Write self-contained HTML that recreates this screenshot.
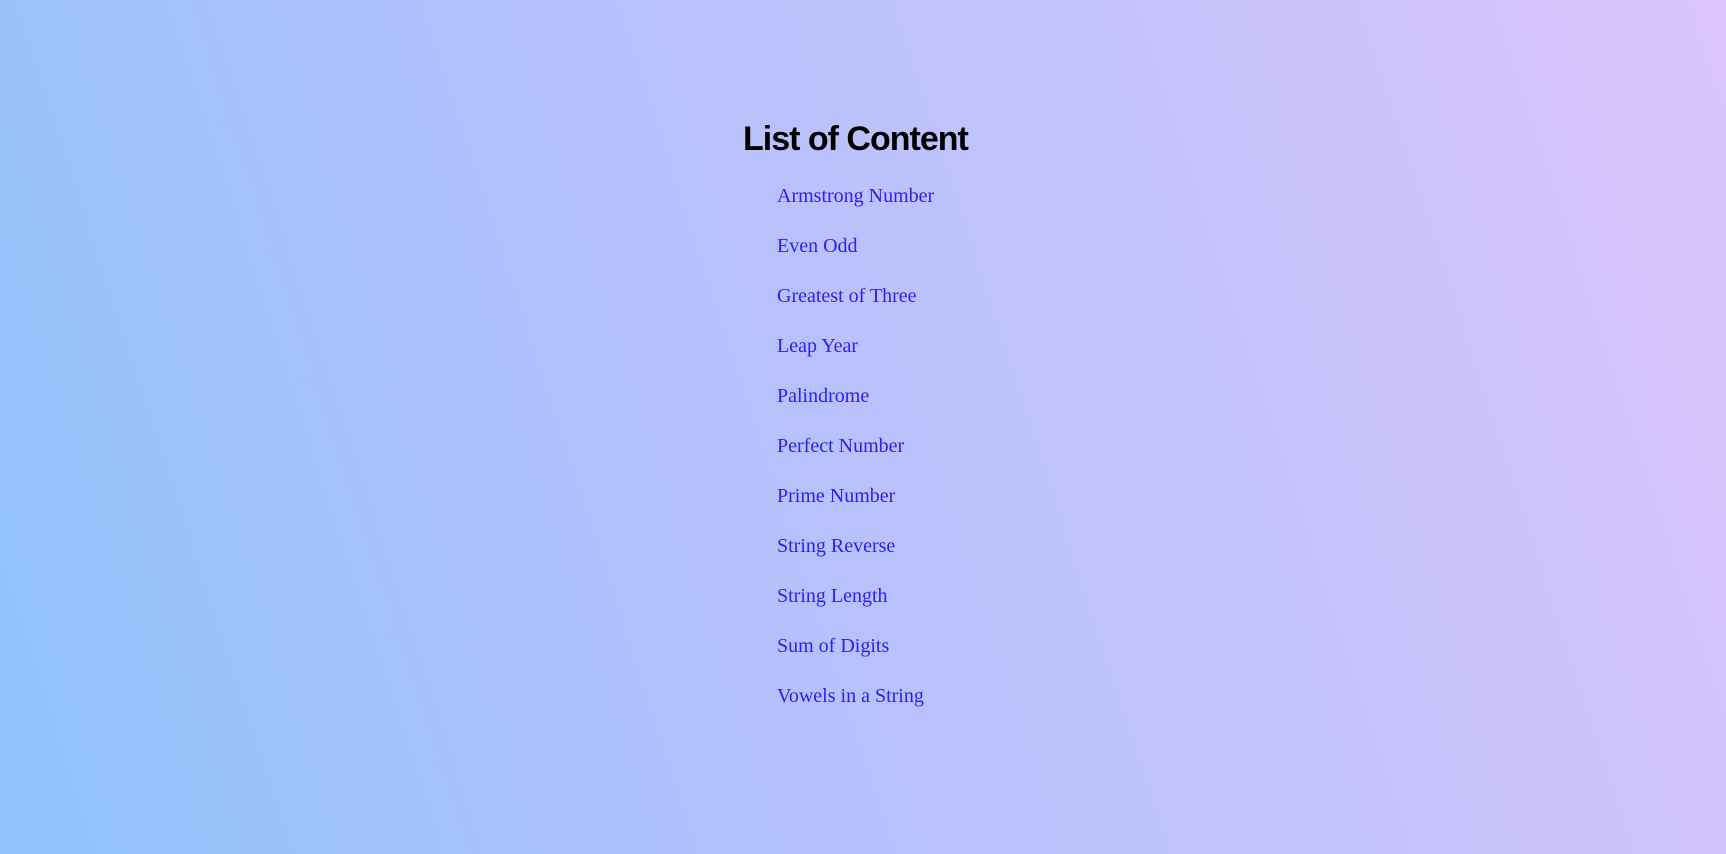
<!DOCTYPE html>
<html><head><style>
html,body{margin:0;padding:0;width:1726px;height:854px;overflow:hidden}
body{background:linear-gradient(72deg,#8fc2fb 0%,#b4c1fc 40%,#c8c2fb 75%,#dcc5fb 100%);position:relative}
h1{position:absolute;left:743px;top:117px;margin:0;font:bold 34px/44px "Liberation Sans",sans-serif;letter-spacing:-1px;color:#000;white-space:nowrap}
a{position:absolute;left:777px;font:20px/24px "Liberation Serif",serif;color:#2a22ee;text-decoration:none;white-space:nowrap}
</style></head><body>
<h1>List of Content</h1>
<a style="top:184px">Armstrong Number</a>
<a style="top:234px">Even Odd</a>
<a style="top:284px">Greatest of Three</a>
<a style="top:334px">Leap Year</a>
<a style="top:384px">Palindrome</a>
<a style="top:434px">Perfect Number</a>
<a style="top:484px">Prime Number</a>
<a style="top:534px">String Reverse</a>
<a style="top:584px">String Length</a>
<a style="top:634px">Sum of Digits</a>
<a style="top:684px">Vowels in a String</a>
</body></html>
